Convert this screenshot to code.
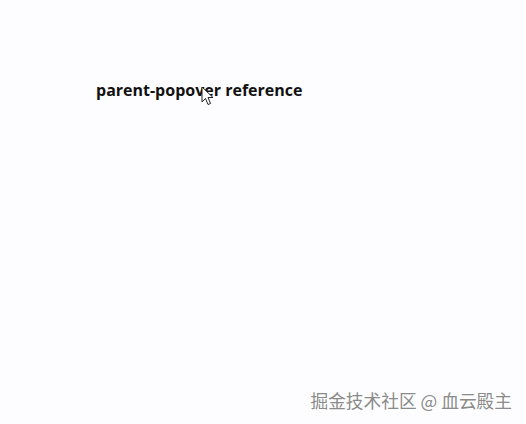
export default function App() {
  return (
    <div className="w-[526px] h-[424px] bg-[#fdfdff] relative overflow-hidden" style={{ fontFamily: '"Open Sans", "Noto Sans CJK SC", sans-serif' }}>
      <div className="pt-[78px] pl-[96px]">
        <span className="font-bold text-[16px] leading-[22px] text-[#111]">parent-popover reference</span>
      </div>
      <svg className="absolute left-[201px] top-[86px]" width="14" height="21" viewBox="0 0 14 21">
        <path d="M1 1 L1 16 L4.5 12.5 L7 18.5 L9.5 17.5 L7 11.5 L12 11.5 Z" fill="#fff" stroke="#222" strokeWidth="1" strokeLinejoin="round" />
      </svg>
      <div className="absolute right-[14px] bottom-[12px] text-[17.7px] leading-[24px] text-[#8a8a8a]" style={{ textShadow: '1px 1px 1px #fff, -1px -1px 1px #fff', fontFamily: '"Noto Sans CJK SC", sans-serif' }}>
        掘金技术社区 @ 血云殿主
      </div>
    </div>
  );
}
